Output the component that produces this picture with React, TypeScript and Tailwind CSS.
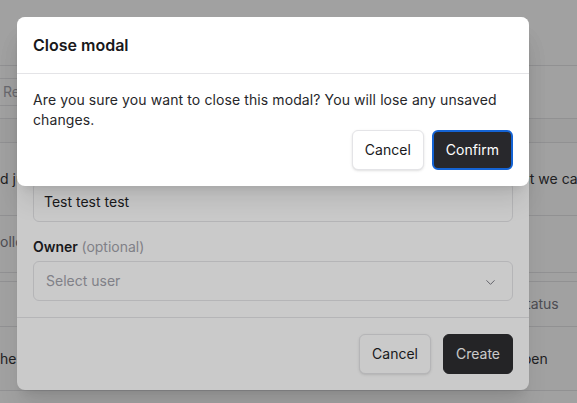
import { ChevronDown } from "lucide-react";

// background page rows, only thin strips stay visible behind the dialogs
function BackgroundPage() {
  return (
    <div className="h-[403px] w-full overflow-hidden bg-white text-sm text-zinc-800">
      <div className="h-[66px] border-b border-zinc-200" />
      <div className="flex h-[52px] items-center">
        <div className="-ml-2.5 flex h-7 w-[260px] items-center rounded-md border border-zinc-200 px-3 text-zinc-400">
          Recent
        </div>
      </div>
      <div className="h-[25px] border-y border-zinc-200 bg-zinc-50" />
      <div className="flex h-[73px] items-center justify-between border-b border-zinc-200">
        <span className="whitespace-nowrap">d just keep it</span>
        <span className="w-[64px] whitespace-nowrap">but we can</span>
      </div>
      <div className="flex h-[57px] items-center border-b border-zinc-200 pb-1 text-zinc-500">
        <span className="whitespace-nowrap">ollow up</span>
      </div>
      <div className="h-[9px] border-b border-zinc-200" />
      <div className="flex h-[45px] items-center justify-end border-b border-zinc-200 text-zinc-500">
        <span className="w-[60px]">Status</span>
      </div>
      <div className="flex h-[64px] items-center justify-between border-b border-zinc-200">
        <span className="whitespace-nowrap">he</span>
        <span className="w-[65px]">Open</span>
      </div>
    </div>
  );
}

function CreateModal() {
  return (
    <div className="absolute left-[17px] top-[17px] flex h-[373px] w-[512px] flex-col rounded-lg bg-white shadow-xl">
      <div className="flex h-[57px] shrink-0 items-center border-b border-zinc-200 px-4">
        <h2 className="text-base font-semibold text-zinc-900">Create issue</h2>
      </div>
      <div className="flex flex-1 flex-col justify-end gap-[15px] px-4 pb-4">
        <div className="flex flex-col gap-1">
          <label className="text-sm font-semibold text-zinc-900">Description</label>
          <div className="flex h-10 items-center rounded-md border border-zinc-200 bg-white px-2.5 text-sm text-zinc-900">
            Test test test
          </div>
        </div>
        <div className="flex flex-col gap-1">
          <label className="text-sm font-semibold text-zinc-900">
            Owner <span className="font-normal text-zinc-400">(optional)</span>
          </label>
          <div className="flex h-10 items-center justify-between rounded-md border border-zinc-200 bg-white pl-3 pr-[14px] text-sm text-zinc-400">
            Select user
            <ChevronDown size={15} strokeWidth={1.5} className="mt-0.5 text-zinc-500" />
          </div>
        </div>
      </div>
      <div className="flex justify-end gap-3 border-t border-zinc-200 p-4">
        <button className="h-10 rounded-md border border-zinc-200 bg-white px-3 text-sm text-zinc-900 shadow-sm">
          Cancel
        </button>
        <button className="h-10 rounded-md border border-zinc-800 bg-zinc-800 px-3 text-sm text-white">
          Create
        </button>
      </div>
    </div>
  );
}

function ConfirmModal() {
  return (
    <div className="absolute left-[17px] top-[17px] w-[512px] rounded-lg bg-white shadow-xl">
      <div className="flex h-[57px] items-center border-b border-zinc-200 px-4">
        <h2 className="text-base font-semibold text-zinc-900">Close modal</h2>
      </div>
      <div className="p-4">
        <p className="text-sm leading-5 tracking-[0.1px] text-zinc-800">
          Are you sure you want to close this modal? You will lose any unsaved changes.
        </p>
        <div className="flex justify-end gap-2">
          <button className="h-10 rounded-md border border-zinc-200 bg-white px-3 text-sm text-zinc-900 shadow-sm">
            Cancel
          </button>
          <button className="h-10 rounded-md border-2 border-[#1463d4] bg-[#28282c] px-3 text-sm text-white">
            Confirm
          </button>
        </div>
      </div>
    </div>
  );
}

export default function App() {
  return (
    <div className="relative h-[403px] w-[577px] overflow-hidden [font-family:Inter,sans-serif]">
      <BackgroundPage />
      <div className="absolute inset-0 bg-[#18181b]/[0.23]" />
      <CreateModal />
      <div className="absolute inset-0 bg-[#18181b]/[0.23]" />
      <ConfirmModal />
    </div>
  );
}
